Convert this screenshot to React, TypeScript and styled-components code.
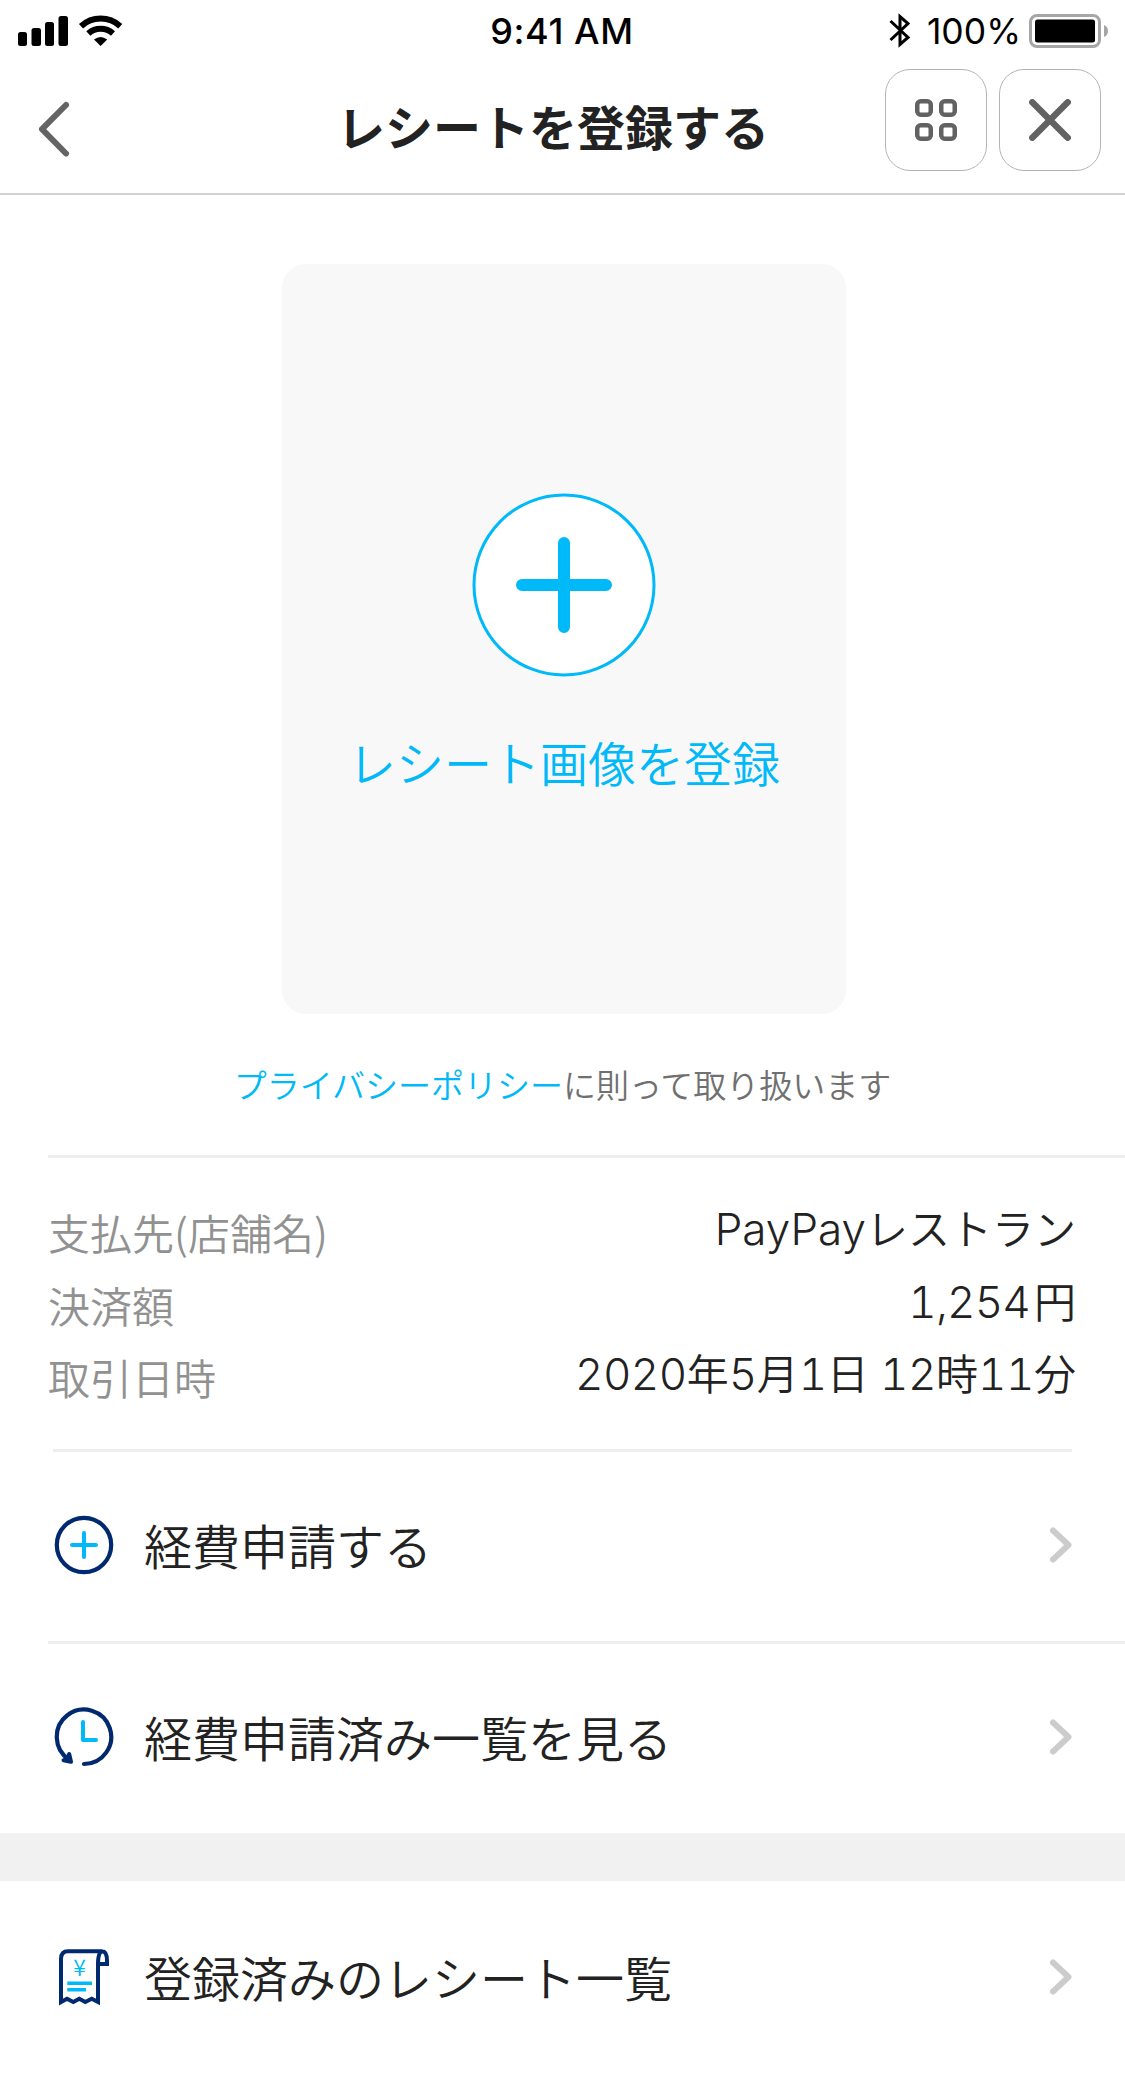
import React from "react";
import styled, { createGlobalStyle } from "styled-components";

const Global = createGlobalStyle`
  * { box-sizing: border-box; }
  body { margin: 0; background: #fff; }
`;

const Screen = styled.div`
  width: 1125px;
  height: 2073px;
  overflow: hidden;
  background: #fff;
  color: #222;
  font-family: "Noto Sans CJK JP", sans-serif;
  font-weight: 350;
  display: flex;
  flex-direction: column;
`;

const StatusBar = styled.div`
  height: 60px;
  flex: none;
  display: grid;
  grid-template-columns: 1fr auto 1fr;
  align-items: center;
  padding: 2px 16px 0 18px;
  font-family: Inter, sans-serif;
  font-size: 36px;
  color: #000;
`;

const StatusGroup = styled.div<{ $end?: boolean }>`
  display: flex;
  align-items: center;
  justify-content: ${(p) => (p.$end ? "flex-end" : "flex-start")};
`;

const Clock = styled.span`
  font-weight: 540;
  letter-spacing: 0.6px;
  margin-right: 3px;
`;

const Percent = styled.span`
  font-size: 35.5px;
  font-weight: 400;
  margin: 0 8px 0 16px;
`;

const NavBar = styled.header`
  height: 135px;
  flex: none;
  display: flex;
  align-items: flex-start;
  justify-content: space-between;
  padding: 9px 24px 0 36px;
  border-bottom: 2px solid #d2d2d2;
`;

const BackButton = styled.button`
  width: 214px;
  padding: 32px 0 0;
  border: 0;
  background: none;
  display: flex;
`;

const Title = styled.h1`
  margin: 0 0 0 87px;
  flex: 1;
  font-size: 48px;
  line-height: 113px;
  font-weight: 700;
`;

const NavActions = styled.div`
  display: flex;
  gap: 12px;
`;

const SquareButton = styled.button`
  width: 102px;
  height: 102px;
  padding: 0;
  border: 1px solid #b4b4b4;
  border-radius: 25px;
  background: #fff;
  display: flex;
  align-items: center;
  justify-content: center;
`;

const UploadCard = styled.button`
  flex: none;
  align-self: center;
  width: 564px;
  height: 750px;
  margin: 69px 0 0 3px;
  padding: 229px 0 0;
  border: 0;
  border-radius: 24px;
  background: #f8f8f8;
  color: #00b9f8;
  display: flex;
  flex-direction: column;
  align-items: center;
  font: inherit;
`;

const UploadLabel = styled.span`
  margin-top: 49px;
  font-size: 48px;
  line-height: 70px;
`;

const Policy = styled.p`
  flex: none;
  margin: 46px 0 0;
  height: 95px;
  text-align: center;
  font-size: 33px;
  line-height: 48px;
  color: #707070;
`;

const PolicyLink = styled.a`
  color: #00b9f8;
`;

const Divider = styled.div<{ $left: number; $right?: number }>`
  flex: none;
  height: 3px;
  margin-left: ${(p) => p.$left}px;
  margin-right: ${(p) => p.$right ?? 0}px;
  background: #eee;
`;

const Details = styled.dl`
  flex: none;
  margin: 0;
  height: 291px;
  padding: 38px 49px 0 48px;
`;

const DetailRow = styled.div`
  height: 72.5px;
  display: flex;
  justify-content: space-between;
`;

const Term = styled.dt`
  padding-top: 6px;
  font-size: 42px;
  line-height: 60px;
  color: #919191;
`;

const Value = styled.dd`
  margin: 0;
  padding-top: 1px;
  font-size: 42px;
  line-height: 60px;
  color: #222;
`;

const Latin = styled.span<{ $spacing: number; $gap?: number }>`
  font-family: Inter, sans-serif;
  font-weight: 300;
  font-feature-settings: "tnum";
  font-size: 44px;
  letter-spacing: ${(p) => p.$spacing}px;
  margin-right: ${(p) => p.$gap ?? 0}px;
  white-space: pre;
`;

const MenuRow = styled.a<{ $top?: number; $bottom?: number }>`
  flex: none;
  height: 189px;
  padding: ${(p) => p.$top ?? 0}px 50px ${(p) => p.$bottom ?? 0}px 54px;
  display: flex;
  align-items: center;
`;

const MenuLabel = styled.span`
  flex: 1;
  margin-left: 30px;
  padding-bottom: 2px;
  font-size: 48px;
  line-height: 70px;
`;

const Band = styled.div`
  flex: none;
  height: 48px;
  background: #f1f1f1;
`;

const Chevron = () => (
  <svg width="25" height="40" viewBox="0 0 25 40" fill="none" stroke="#ccc" strokeWidth="6" strokeLinecap="round" strokeLinejoin="round">
    <path d="M3 5.500L18.500 20L3 34.500" />
  </svg>
);

const PlusCircleIcon = () => (
  <svg width="60" height="60" viewBox="0 0 60 60" fill="none" strokeLinecap="round" strokeWidth="4">
    <circle cx="30" cy="30" r="27.200" stroke="#002970" strokeWidth="4.200" />
    <path d="M30 18V42M18 30H42" stroke="#00b9f8" />
  </svg>
);

const HistoryIcon = () => (
  <svg width="60" height="60" viewBox="0 0 60 60" fill="none" strokeLinecap="round" strokeLinejoin="round" strokeWidth="4">
    <path d="M30 57A27.200 27.200 0 1 0 15 52.500" stroke="#002970" strokeWidth="4.200" />
    <path d="M9.500 53.300L17 54.800L15.200 47L13.500 51.500Z" stroke="#002970" fill="#002970" />
    <path d="M29 15V33H42" stroke="#00b9f8" />
  </svg>
);

const ReceiptIcon = () => (
  <svg width="60" height="60" viewBox="0 0 60 60" fill="none" strokeWidth="4">
    <path
      d="M44 17V55L37.700 51.700L31.300 55L25.300 51.700L19.300 55L13 51.700L7 55V12Q7 4.300 14 4.300H48.500Q44 5 44 17H53V14Q53 4.300 48 4.300"
      stroke="#002970"
    />
    <path d="M13.300 36.300H38M13.300 42.700H32" stroke="#00b9f8" strokeWidth="3.500" />
    <text x="25.500" y="29" textAnchor="middle" fontSize="23" fontWeight="350" fontFamily="Noto Sans CJK JP" fill="#00b9f8">¥</text>
  </svg>
);

const rows = [
  { term: "支払先(店舗名)", value: "PayPayレストラン", spacing: 0 },
  { term: "決済額", value: "1,254円", spacing: -0.8, gap: 4 },
  { term: "取引日時", value: "2020年5月1日 12時11分", spacing: -0.5 },
];

const splitRuns = (value: string) => value.split(/([ -~]+)/).filter(Boolean);

export default function App() {
  return (
    <Screen>
      <Global />
      <StatusBar>
        <StatusGroup>
          <svg width="104" height="32" viewBox="0 0 104 32">
            <rect x="0" y="17" width="9" height="14" rx="2.500" />
            <rect x="13.500" y="13" width="9.500" height="18" rx="2.500" />
            <rect x="27" y="7" width="9" height="24" rx="2.500" />
            <rect x="40.500" y="1" width="9.500" height="30" rx="2.500" />
            <g fill="none" stroke="#000">
              <path d="M63 11.200A29 29 0 0 1 102.300 11.200" strokeWidth="6" />
              <path d="M70.300 18.600A18.500 18.500 0 0 1 95 18.600" strokeWidth="6" />
            </g>
            <path d="M76 24.500Q82.600 19.500 89.200 24.500L82.600 31Z" />
          </svg>
        </StatusGroup>
        <Clock>9:41 AM</Clock>
        <StatusGroup $end>
          <svg width="22" height="36" viewBox="0 0 22 36" fill="none" stroke="#000" strokeWidth="3">
            <path d="M1.500 8L19 24.500L11 31.500V3.500L19 10.500L1.500 27" />
          </svg>
          <Percent>100%</Percent>
          <svg width="80" height="34" viewBox="0 0 80 34">
            <rect x="1.500" y="1.500" width="69" height="31" rx="6.500" fill="none" stroke="#a6a6a6" strokeWidth="3" />
            <rect x="6" y="5.500" width="60" height="23" rx="2.500" />
            <path d="M75 11Q79 12.500 79 17T75 23Z" fill="#a6a6a6" />
          </svg>
        </StatusGroup>
      </StatusBar>

      <NavBar>
        <BackButton>
          <svg width="36" height="56" viewBox="0 0 36 56" fill="none" stroke="#646464" strokeWidth="6" strokeLinecap="round" strokeLinejoin="round">
            <path d="M30 4L6 28.200L30 52.500" />
          </svg>
        </BackButton>
        <Title>レシートを登録する</Title>
        <NavActions>
          <SquareButton>
            <svg width="42" height="42" viewBox="0 0 42 42" fill="none" stroke="#626262" strokeWidth="4.500">
              <rect x="2.250" y="2.250" width="13.500" height="13.500" rx="3.500" />
              <rect x="26.250" y="2.250" width="13.500" height="13.500" rx="3.500" />
              <rect x="2.250" y="26.250" width="13.500" height="13.500" rx="3.500" />
              <rect x="26.250" y="26.250" width="13.500" height="13.500" rx="3.500" />
            </svg>
          </SquareButton>
          <SquareButton>
            <svg width="42" height="42" viewBox="0 0 42 42" stroke="#626262" strokeWidth="6.500" strokeLinecap="round">
              <path d="M3.300 3.300L38.700 38.700M38.700 3.300L3.300 38.700" />
            </svg>
          </SquareButton>
        </NavActions>
      </NavBar>

      <UploadCard>
        <svg width="184" height="184" viewBox="0 0 184 184" stroke="#00b9f8">
          <circle cx="92" cy="92" r="90" fill="#fff" strokeWidth="3" />
          <path d="M92 50V134M50 92H134" strokeWidth="12" strokeLinecap="round" />
        </svg>
        <UploadLabel>レシート画像を登録</UploadLabel>
      </UploadCard>
      <Policy>
        <PolicyLink>プライバシーポリシー</PolicyLink>に則って取り扱います
      </Policy>

      <Divider $left={48} />
      <Details>
        {rows.map(({ term, value, spacing, gap }) => (
          <DetailRow key={term}>
            <Term>{term}</Term>
            <Value>
              {splitRuns(value).map((run, i) =>
                /^[ -~]/.test(run) ? (
                  <Latin key={i} $spacing={spacing} $gap={gap}>{run}</Latin>
                ) : (
                  <React.Fragment key={i}>{run}</React.Fragment>
                )
              )}
            </Value>
          </DetailRow>
        ))}
      </Details>
      <Divider $left={53} $right={53} />

      <MenuRow $bottom={3}>
        <PlusCircleIcon />
        <MenuLabel>経費申請する</MenuLabel>
        <Chevron />
      </MenuRow>
      <Divider $left={48} />
      <MenuRow $bottom={3}>
        <HistoryIcon />
        <MenuLabel>経費申請済み一覧を見る</MenuLabel>
        <Chevron />
      </MenuRow>
      <Band />
      <MenuRow $top={3}>
        <ReceiptIcon />
        <MenuLabel>登録済みのレシート一覧</MenuLabel>
        <Chevron />
      </MenuRow>
    </Screen>
  );
}
